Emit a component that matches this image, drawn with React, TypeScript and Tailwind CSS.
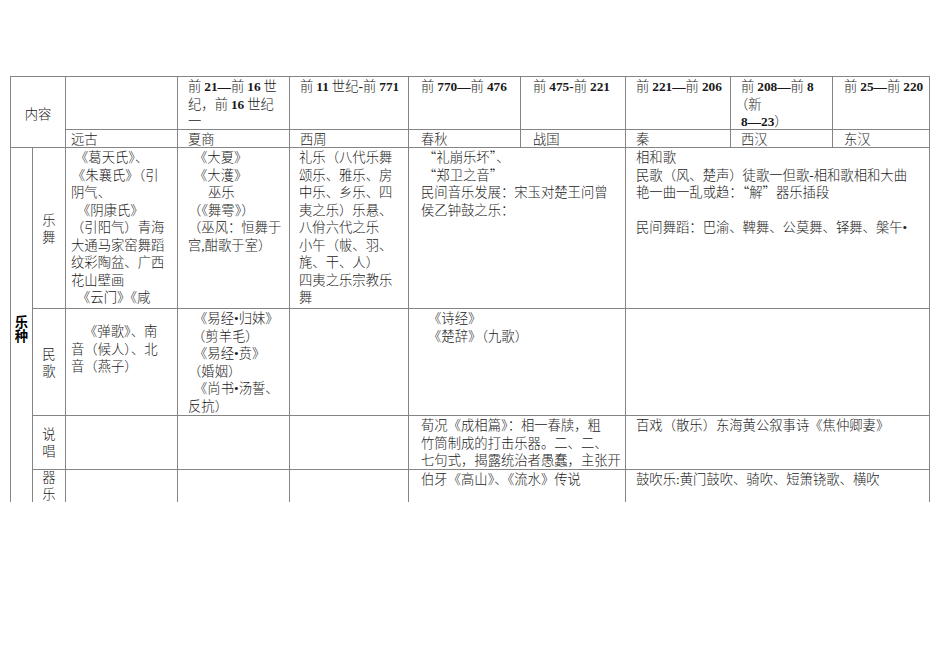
import React from "react";

// numbers in the period headers are set in bold Times
const B = ({ children }: { children: React.ReactNode }) => (
  <span className="font-['Liberation_Serif'] font-bold leading-[10px]">{children}</span>
);

type Line = { t: string; i?: string };

// Latin punctuation inside the Chinese text comes from Times in the original
const Txt = ({ t }: { t: string }) => (
  <>
    {t.split(/([•\-,:])/).map((p, k) =>
      /^[•\-,:]$/.test(p) ? (
        <span key={k} className="font-['Liberation_Serif'] leading-[10px]">
          {p}
        </span>
      ) : (
        <React.Fragment key={k}>{p}</React.Fragment>
      )
    )}
  </>
);

const Lines = ({ lines }: { lines: Line[] }) => (
  <>
    {lines.map((l, k) => (
      <div key={k} className={`h-[17.5px] whitespace-nowrap ${l.i ?? ""}`}>
        {l.t ? <Txt t={l.t} /> : "\u00a0"}
      </div>
    ))}
  </>
);

const cell = "border border-[#858585] p-0 align-top";
const label = "border border-[#858585] p-0 align-middle text-center";

const yueWu = {
  yuangu: [
    { t: "《葛天氏》、", i: "pl-[4px]" },
    { t: "《朱襄氏》（引", i: "pl-[1px]" },
    { t: "阴气、" },
    { t: "《阴康氏》", i: "pl-[6px]" },
    { t: "（引阳气）青海" },
    { t: "大通马家窑舞蹈" },
    { t: "纹彩陶盆、广西" },
    { t: "花山壁画" },
    { t: "《云门》《咸", i: "pl-[6px]" },
  ],
  xiashang: [
    { t: "《大夏》", i: "pl-[6px]" },
    { t: "《大濩》", i: "pl-[6px]" },
    { t: "巫乐", i: "pl-[20px]" },
    { t: "（《舞雩》）" },
    { t: "（巫风：恒舞于" },
    { t: "宫,酣歌于室）" },
  ],
  xizhou: [
    { t: "礼乐（八代乐舞" },
    { t: "颂乐、雅乐、房" },
    { t: "中乐、乡乐、四" },
    { t: "夷之乐）乐悬、" },
    { t: "八佾六代之乐" },
    { t: "小午（帗、羽、" },
    { t: "旄、干、人）" },
    { t: "四夷之乐宗教乐" },
    { t: "舞" },
  ],
  chunqiu: [
    { t: "“礼崩乐坏”、", i: "pl-[2px]" },
    { t: "“郑卫之音”", i: "pl-[2px]" },
    { t: "民间音乐发展：宋玉对楚王问曾" },
    { t: "侯乙钟鼓之乐：" },
  ],
  qinhan: [
    { t: "相和歌" },
    { t: "民歌（风、楚声）徒歌一但歌-相和歌相和大曲" },
    { t: "艳一曲一乱或趋：“解”器乐插段" },
    { t: "" },
    { t: "民间舞蹈：巴渝、鞞舞、公莫舞、铎舞、槃午•" },
  ],
};

const minGe = {
  yuangu: [
    { t: "《弹歌》、南", i: "pl-[13px]" },
    { t: "音（候人）、北" },
    { t: "音（燕子）" },
  ],
  xiashang: [
    { t: "《易经•归妹》", i: "pl-[6px]" },
    { t: "（剪羊毛）", i: "pl-[4px]" },
    { t: "《易经•贲》", i: "pl-[6px]" },
    { t: "（婚姻）" },
    { t: "《尚书•汤誓、", i: "pl-[6px]" },
    { t: "反抗）" },
  ],
  chunqiu: [
    { t: "《诗经》", i: "pl-[7px]" },
    { t: "《楚辞》（九歌）", i: "pl-[7px]" },
  ],
};

export default function App() {
  return (
    <div className="min-h-[672px] bg-white pl-[10px] pt-[76px] font-['Noto_Sans_CJK_SC',sans-serif] text-[13.33px] font-light leading-[17.5px] text-[#1a1a1a]">
      {/* the page ends here; the table carries on past the cut */}
      <div className="h-[426px] w-[921px] overflow-hidden">
        <table className="w-[919px] table-fixed border-collapse">
          <colgroup>
            <col className="w-[22px]" />
            <col className="w-[33px]" />
            <col className="w-[112px]" />
            <col className="w-[112px]" />
            <col className="w-[119px]" />
            <col className="w-[112px]" />
            <col className="w-[105px]" />
            <col className="w-[105px]" />
            <col className="w-[102px]" />
            <col className="w-[97px]" />
          </colgroup>
          <tbody>
            <tr className="h-[53px]">
              <td rowSpan={2} colSpan={2} className={`${label} pt-[4px]`}>
                内容
              </td>
              <td className={cell}></td>
              <td className={`${cell} pl-[10px]`}>
                <div className="h-[17.5px]">
                  前 <B>21—</B>前 <B>16</B> 世
                </div>
                <div className="h-[17.5px]">
                  纪，前 <B>16</B> 世纪
                </div>
                <div className="h-[16px]">一</div>
              </td>
              <td className={`${cell} pl-[10px]`}>
                前 <B>11</B> 世纪<B>-</B>前 <B>771</B>
              </td>
              <td className={`${cell} pl-[12px]`}>
                前 <B>770—</B>前 <B>476</B>
              </td>
              <td className={`${cell} pl-[12px]`}>
                前 <B>475-</B>前 <B>221</B>
              </td>
              <td className={`${cell} pl-[10px]`}>
                前 <B>221—</B>前 <B>206</B>
              </td>
              <td className={`${cell} pl-[10px]`}>
                <div className="h-[17.5px]">
                  前 <B>208—</B>前 <B>8</B>
                </div>
                <div className="-ml-[6px] h-[17.5px]">（新</div>
                <div className="h-[16px]">
                  <B>8—23</B>）
                </div>
              </td>
              <td className={`${cell} pl-[11px]`}>
                前 <B>25—</B>前 <B>220</B>
              </td>
            </tr>
            <tr className="h-[17px] leading-[17px]">
              <td className={`${cell} pl-[5px]`}>远古</td>
              <td className={`${cell} pl-[10px]`}>夏商</td>
              <td className={`${cell} pl-[10px]`}>西周</td>
              <td className={`${cell} pl-[12px]`}>春秋</td>
              <td className={`${cell} pl-[12px]`}>战国</td>
              <td className={`${cell} pl-[10px]`}>秦</td>
              <td className={`${cell} pl-[10px]`}>西汉</td>
              <td className={`${cell} pl-[11px]`}>东汉</td>
            </tr>

            <tr className="h-[161px]">
              <td
                rowSpan={4}
                className={`${label} border-b-0 font-bold leading-[14px] text-black`}
              >
                乐
                <br />种
              </td>
              <td className={label}>
                乐
                <br />舞
              </td>
              <td className={`${cell} pl-[5px]`}>
                <Lines lines={yueWu.yuangu} />
              </td>
              <td className={`${cell} pl-[10px]`}>
                <Lines lines={yueWu.xiashang} />
              </td>
              <td className={`${cell} pl-[9px]`}>
                <Lines lines={yueWu.xizhou} />
              </td>
              <td colSpan={2} className={`${cell} pl-[12px]`}>
                <Lines lines={yueWu.chunqiu} />
              </td>
              <td colSpan={3} className={`${cell} pl-[10px]`}>
                <Lines lines={yueWu.qinhan} />
              </td>
            </tr>

            <tr className="h-[107px]">
              <td className={label}>
                民
                <br />歌
              </td>
              <td className={`${cell} pl-[5px] pt-[13px]`}>
                <Lines lines={minGe.yuangu} />
              </td>
              <td className={`${cell} pl-[10px]`}>
                <Lines lines={minGe.xiashang} />
              </td>
              <td className={cell}></td>
              <td colSpan={2} className={`${cell} pl-[12px]`}>
                <Lines lines={minGe.chunqiu} />
              </td>
              <td colSpan={3} className={cell}></td>
            </tr>

            <tr className="h-[53px]">
              <td className={label}>
                说
                <br />唱
              </td>
              <td className={cell}></td>
              <td className={cell}></td>
              <td className={cell}></td>
              <td colSpan={2} className={`${cell} pl-[12px]`}>
                <Lines
                  lines={[
                    { t: "荀况《成相篇》：相一春牍，粗" },
                    { t: "竹筒制成的打击乐器。二、二、" },
                    { t: "七句式，揭露统治者愚蠢，主张开" },
                  ]}
                />
              </td>
              <td colSpan={3} className={`${cell} pl-[10px]`}>
                <Lines lines={[{ t: "百戏（散乐）东海黄公叙事诗《焦仲卿妻》" }]} />
              </td>
            </tr>

            <tr className="h-[40px]">
              <td className={`${cell} border-b-0 text-center`}>
                <div className="-mt-[2px] leading-[17px]">
                  器
                  <br />乐
                </div>
              </td>
              <td className={`${cell} border-b-0`}></td>
              <td className={`${cell} border-b-0`}></td>
              <td className={`${cell} border-b-0`}></td>
              <td colSpan={2} className={`${cell} border-b-0 pl-[12px]`}>
                <Lines lines={[{ t: "伯牙《高山》、《流水》传说" }]} />
              </td>
              <td colSpan={3} className={`${cell} border-b-0 pl-[10px]`}>
                <Lines lines={[{ t: "鼓吹乐:黄门鼓吹、骑吹、短箫铙歌、横吹" }]} />
              </td>
            </tr>
          </tbody>
        </table>
      </div>
    </div>
  );
}
